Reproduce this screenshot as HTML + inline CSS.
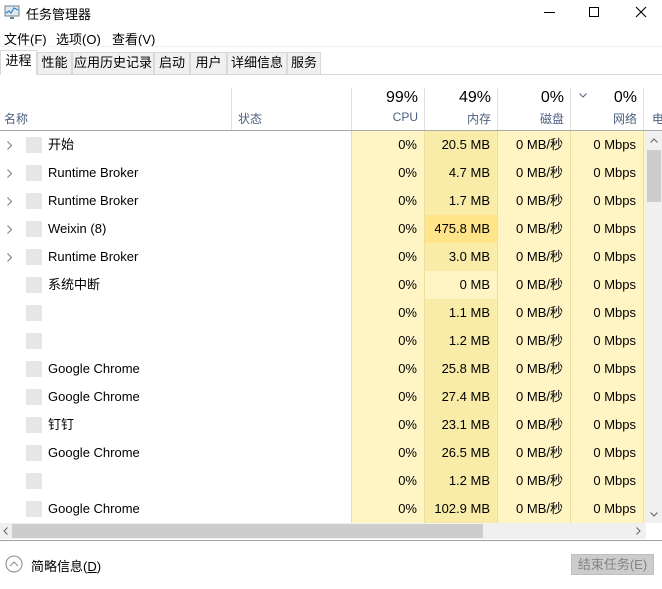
<!DOCTYPE html>
<html><head><meta charset="utf-8"><style>
*{margin:0;padding:0;box-sizing:border-box}
body{width:662px;height:589px;overflow:hidden;background:#fff;font-family:"Liberation Sans","Noto Sans CJK SC",sans-serif;font-size:13px;color:#000;position:relative}
.a{position:absolute;white-space:nowrap}
.tab{position:absolute;top:52px;height:22px;background:#f0f0f0;border:1px solid #d9d9d9;border-bottom:none;font-size:13px;line-height:20px;text-align:center}
.row{position:absolute;left:0;width:646px;height:28px}
.cell{position:absolute;top:0;height:28px;line-height:28px;text-align:right;padding-right:7px}
.nm{position:absolute;left:48px;top:0;height:28px;line-height:28px;white-space:nowrap}
.hs{position:absolute;top:88px;height:42px;width:1px;background:#e0e0e0}
</style></head><body>
<svg class="a" style="left:4px;top:4px" width="16" height="16"><rect x="1" y="2" width="14" height="10" fill="#dfe8ee" stroke="#6b7f8c"/><polyline points="2,9 5,7 7,9 10,4 14,6" fill="none" stroke="#2c83c8" stroke-width="1.2"/><rect x="6" y="13" width="4" height="2" fill="#6b7f8c"/></svg>
<div class="a" style="left:26px;top:4px;font-size:13px">任务管理器</div>
<div class="a" style="left:544px;top:12px;width:11px;height:1px;background:#000"></div>
<div class="a" style="left:589px;top:7px;width:10px;height:10px;border:1px solid #000"></div>
<svg class="a" style="left:635px;top:6px" width="12" height="12"><path d="M1 1L11 11M11 1L1 11" stroke="#000" stroke-width="1.1"/></svg>
<div class="a" style="left:4px;top:29px">文件(F)</div>
<div class="a" style="left:56px;top:29px">选项(O)</div>
<div class="a" style="left:112px;top:29px">查看(V)</div>
<div class="a" style="left:0;top:46px;width:662px;height:1px;background:#f0f0f0"></div>
<div class="a" style="left:0;top:74px;width:662px;height:1px;background:#d9d9d9"></div>
<div class="tab" style="left:37px;width:35px">性能</div>
<div class="tab" style="left:72px;width:82px">应用历史记录</div>
<div class="tab" style="left:154px;width:36px">启动</div>
<div class="tab" style="left:190px;width:37px">用户</div>
<div class="tab" style="left:227px;width:60px">详细信息</div>
<div class="tab" style="left:287px;width:34px">服务</div>
<div class="tab" style="left:0;top:50px;width:37px;height:25px;background:#fff;border-bottom:none">进程</div>

<div class="hs" style="left:231px"></div><div class="hs" style="left:351px"></div><div class="hs" style="left:424px"></div><div class="hs" style="left:497px"></div><div class="hs" style="left:570px"></div><div class="hs" style="left:643px"></div>
<div class="a" style="left:4px;top:110px;color:#4d6082;font-size:12px">名称</div>
<div class="a" style="left:238px;top:110px;color:#4d6082;font-size:12px">状态</div>
<div class="a" style="right:244px;top:89px;font-size:16px">99%</div>
<div class="a" style="right:244px;top:110px;color:#4d6082;font-size:12px">CPU</div>
<div class="a" style="right:171px;top:89px;font-size:16px">49%</div>
<div class="a" style="right:171px;top:110px;color:#4d6082;font-size:12px">内存</div>
<div class="a" style="right:98px;top:89px;font-size:16px">0%</div>
<div class="a" style="right:98px;top:110px;color:#4d6082;font-size:12px">磁盘</div>
<svg class="a" style="left:579px;top:93px" width="8" height="5"><path d="M0.5 0.5L4 4L7.5 0.5" fill="none" stroke="#4d6082"/></svg>
<div class="a" style="right:25px;top:89px;font-size:16px">0%</div>
<div class="a" style="right:25px;top:110px;color:#4d6082;font-size:12px">网络</div>
<div class="a" style="left:652px;top:110px;color:#4d6082;font-size:12px">电</div>
<div class="a" style="left:0;top:130px;width:662px;height:1px;background:#aaa"></div>
<div class="a" style="left:351px;top:131px;width:295px;height:392px;background:#fff4c4"></div>
<div class="a" style="left:424px;top:131px;width:1px;height:392px;background:#eedf9e"></div>
<div class="a" style="left:497px;top:131px;width:1px;height:392px;background:#eedf9e"></div>
<div class="a" style="left:570px;top:131px;width:1px;height:392px;background:#eedf9e"></div>
<div class="a" style="left:351px;top:131px;width:1px;height:392px;background:#eedf9e"></div>
<div class="a" style="left:643px;top:131px;width:1px;height:392px;background:#eedf9e"></div>
<div id="rows"></div>
<div class="a" style="left:646px;top:131px;width:16px;height:392px;background:#f0f0f0"></div>
<div class="a" style="left:647px;top:150px;width:14px;height:52px;background:#cdcdcd"></div>
<svg class="a" style="left:650px;top:138px" width="8" height="5"><path d="M0.5 4.5L4 1L7.5 4.5" fill="none" stroke="#606060"/></svg>
<svg class="a" style="left:650px;top:512px" width="8" height="5"><path d="M0.5 0.5L4 4L7.5 0.5" fill="none" stroke="#606060"/></svg>
<div class="a" style="left:0;top:523px;width:646px;height:16px;background:#f0f0f0"></div>
<div class="a" style="left:12px;top:524px;width:471px;height:14px;background:#cdcdcd"></div>
<svg class="a" style="left:3px;top:527px" width="5" height="8"><path d="M4.5 0.5L1 4L4.5 7.5" fill="none" stroke="#606060"/></svg>
<svg class="a" style="left:636px;top:527px" width="5" height="8"><path d="M0.5 0.5L4 4L0.5 7.5" fill="none" stroke="#606060"/></svg>
<div class="a" style="left:0;top:540px;width:662px;height:1px;background:#a0a0a0"></div>
<svg class="a" style="left:5px;top:555px" width="18" height="18"><circle cx="9" cy="9" r="8" fill="none" stroke="#888"/><polyline points="5,11 9,7 13,11" fill="none" stroke="#888"/></svg>
<div class="a" style="left:31px;top:556px">简略信息(<u>D</u>)</div>
<div class="a" style="left:571px;top:554px;width:83px;height:21px;background:#ccc;border:1px solid #bfbfbf;color:#838383;text-align:center;line-height:19px">结束任务(E)</div>
<script>
var d=[["开始",1,"20.5 MB","#f9eca8"],["Runtime Broker",1,"4.7 MB","#f9eca8"],["Runtime Broker",1,"1.7 MB","#f9eca8"],["Weixin (8)",1,"475.8 MB","#ffe48a"],["Runtime Broker",1,"3.0 MB","#f9eca8"],["系统中断",0,"0 MB","#fff4c4"],["",0,"1.1 MB","#f9eca8"],["",0,"1.2 MB","#f9eca8"],["Google Chrome",0,"25.8 MB","#f9eca8"],["Google Chrome",0,"27.4 MB","#f9eca8"],["钉钉",0,"23.1 MB","#f9eca8"],["Google Chrome",0,"26.5 MB","#f9eca8"],["",0,"1.2 MB","#f9eca8"],["Google Chrome",0,"102.9 MB","#f9eca8"]];
var h="";d.forEach(function(r,i){var t=131+28*i;h+='<div class="row" style="top:'+t+'px">'+(r[1]?'<svg class="a" style="left:7px;top:10px" width="5" height="9"><path d="M0.5 0.5L4.5 4.5L0.5 8.5" fill="none" stroke="#888" stroke-width="1.2"/></svg>':'')+'<div class="a" style="left:26px;top:6px;width:16px;height:16px;background:#e6e6e6"></div><div class="nm">'+r[0]+'</div><div class="cell" style="left:352px;width:72px">0%</div><div class="cell" style="left:425px;width:72px;background:'+r[3]+'">'+r[2]+'</div><div class="cell" style="left:498px;width:72px">0 MB/秒</div><div class="cell" style="left:571px;width:72px">0 Mbps</div></div>'});
document.getElementById("rows").innerHTML=h;
</script>
</body></html>
